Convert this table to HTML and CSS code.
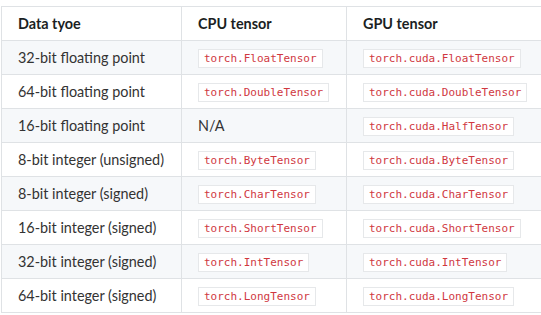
FILE: index.html
```html
<!DOCTYPE html>
<html>
<head>
<meta charset="utf-8">
<link rel="stylesheet" href="styles.css">
</head>
<body>
<div class="wrap">
<table class="types">
<colgroup><col class="c1"><col class="c2"><col class="c3"></colgroup>
<thead>
<tr><th>Data tyoe</th><th>CPU tensor</th><th>GPU tensor</th></tr>
</thead>
<tbody>
<tr><td>32-bit floating point</td><td><code>torch.FloatTensor</code></td><td><code>torch.cuda.FloatTensor</code></td></tr>
<tr><td>64-bit floating point</td><td><code>torch.DoubleTensor</code></td><td><code>torch.cuda.DoubleTensor</code></td></tr>
<tr><td>16-bit floating point</td><td>N/A</td><td><code>torch.cuda.HalfTensor</code></td></tr>
<tr><td>8-bit integer (unsigned)</td><td><code>torch.ByteTensor</code></td><td><code>torch.cuda.ByteTensor</code></td></tr>
<tr><td>8-bit integer (signed)</td><td><code>torch.CharTensor</code></td><td><code>torch.cuda.CharTensor</code></td></tr>
<tr><td>16-bit integer (signed)</td><td><code>torch.ShortTensor</code></td><td><code>torch.cuda.ShortTensor</code></td></tr>
<tr><td>32-bit integer (signed)</td><td><code>torch.IntTensor</code></td><td><code>torch.cuda.IntTensor</code></td></tr>
<tr><td>64-bit integer (signed)</td><td><code>torch.LongTensor</code></td><td><code>torch.cuda.LongTensor</code></td></tr>
</tbody>
</table>
</div>
</body>
</html>
```
FILE: styles.css
```css
html, body {
  margin: 0;
  padding: 0;
  background: #fff;
  overflow: hidden;
}
.wrap {
  padding: 6px 0 0 1px;
  width: 600px;
}
.types {
  border-collapse: collapse;
  table-layout: fixed;
  width: 580px;
  font-family: Lato, "Open Sans", sans-serif;
  font-size: 14.4px;
  color: #333;
}
.c1 { width: 180px; }
.c2 { width: 165px; }
.c3 { width: 235px; }
.types th, .types td {
  border: 1px solid #dfe2e5;
  height: 34px;
  padding: 0 16px;
  text-align: left;
  vertical-align: middle;
  white-space: nowrap;
  box-sizing: border-box;
}
.types th {
  font-weight: bold;
  color: #1b1f23;
}
.types tbody tr:nth-child(odd) td {
  background: #f6f8fa;
}
.types code {
  display: inline-block;
  font-family: "DejaVu Sans Mono", "Liberation Mono", monospace;
  font-size: 11px;
  line-height: 17px;
  color: #d0383f;
  background: #fff;
  border: 1px solid #e6e8ea;
  padding: 0 5px;
}
```
